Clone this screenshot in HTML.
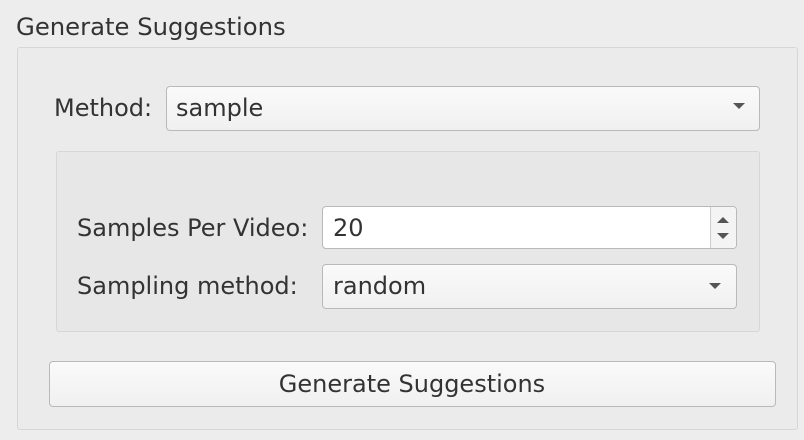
<!DOCTYPE html>
<html><head><style>
body{margin:0;width:804px;height:440px;background:#ededed;font-family:"DejaVu Sans","Liberation Sans",sans-serif;color:#333;font-size:24px;position:relative;overflow:hidden}
.a{position:absolute;box-sizing:border-box}
.t{position:absolute;white-space:nowrap;line-height:1}
.box{border:1px solid #d6d6d6;border-radius:3px}
.field{border:1px solid #b9b9b9;border-radius:4px;background:linear-gradient(#fafafa,#f0f0f0)}
.arrow{position:absolute;width:0;height:0;border-left:6px solid transparent;border-right:6px solid transparent;border-top:6px solid #555}
</style></head><body>
<div class="t" style="left:16px;top:15px;font-size:24.3px">Generate Suggestions</div>
<div class="a box" style="left:17px;top:47px;width:781px;height:383px;background:#ebebeb"></div>
<div class="t" style="left:54px;top:96px">Method:</div>
<div class="a field" style="left:166px;top:86px;width:594px;height:45px"></div>
<div class="t" style="left:176px;top:96px">sample</div>
<div class="arrow" style="left:733px;top:103px"></div>
<div class="a box" style="left:56px;top:151px;width:704px;height:181px;background:#e7e7e7"></div>
<div class="t" style="left:77px;top:216px">Samples Per Video:</div>
<div class="a" style="left:322px;top:206px;width:415px;height:43px;border:1px solid #b9b9b9;border-radius:4px;background:#fff"></div>
<div class="a" style="left:710px;top:207px;width:26px;height:41px;border-left:1px solid #ccc;background:#f4f4f4;border-radius:0 3px 3px 0"></div>
<div class="a" style="left:717px;top:217px;width:0;height:0;border-left:6px solid transparent;border-right:6px solid transparent;border-bottom:6px solid #555"></div>
<div class="arrow" style="left:717px;top:233px"></div>
<div class="t" style="left:333px;top:216px">20</div>
<div class="t" style="left:77px;top:274px">Sampling method:</div>
<div class="a field" style="left:322px;top:264px;width:415px;height:45px"></div>
<div class="t" style="left:333px;top:274px">random</div>
<div class="arrow" style="left:709px;top:283px"></div>
<div class="a field" style="left:49px;top:361px;width:727px;height:46px"></div>
<div class="t" style="left:0;width:824px;text-align:center;top:372px">Generate Suggestions</div>
</body></html>
